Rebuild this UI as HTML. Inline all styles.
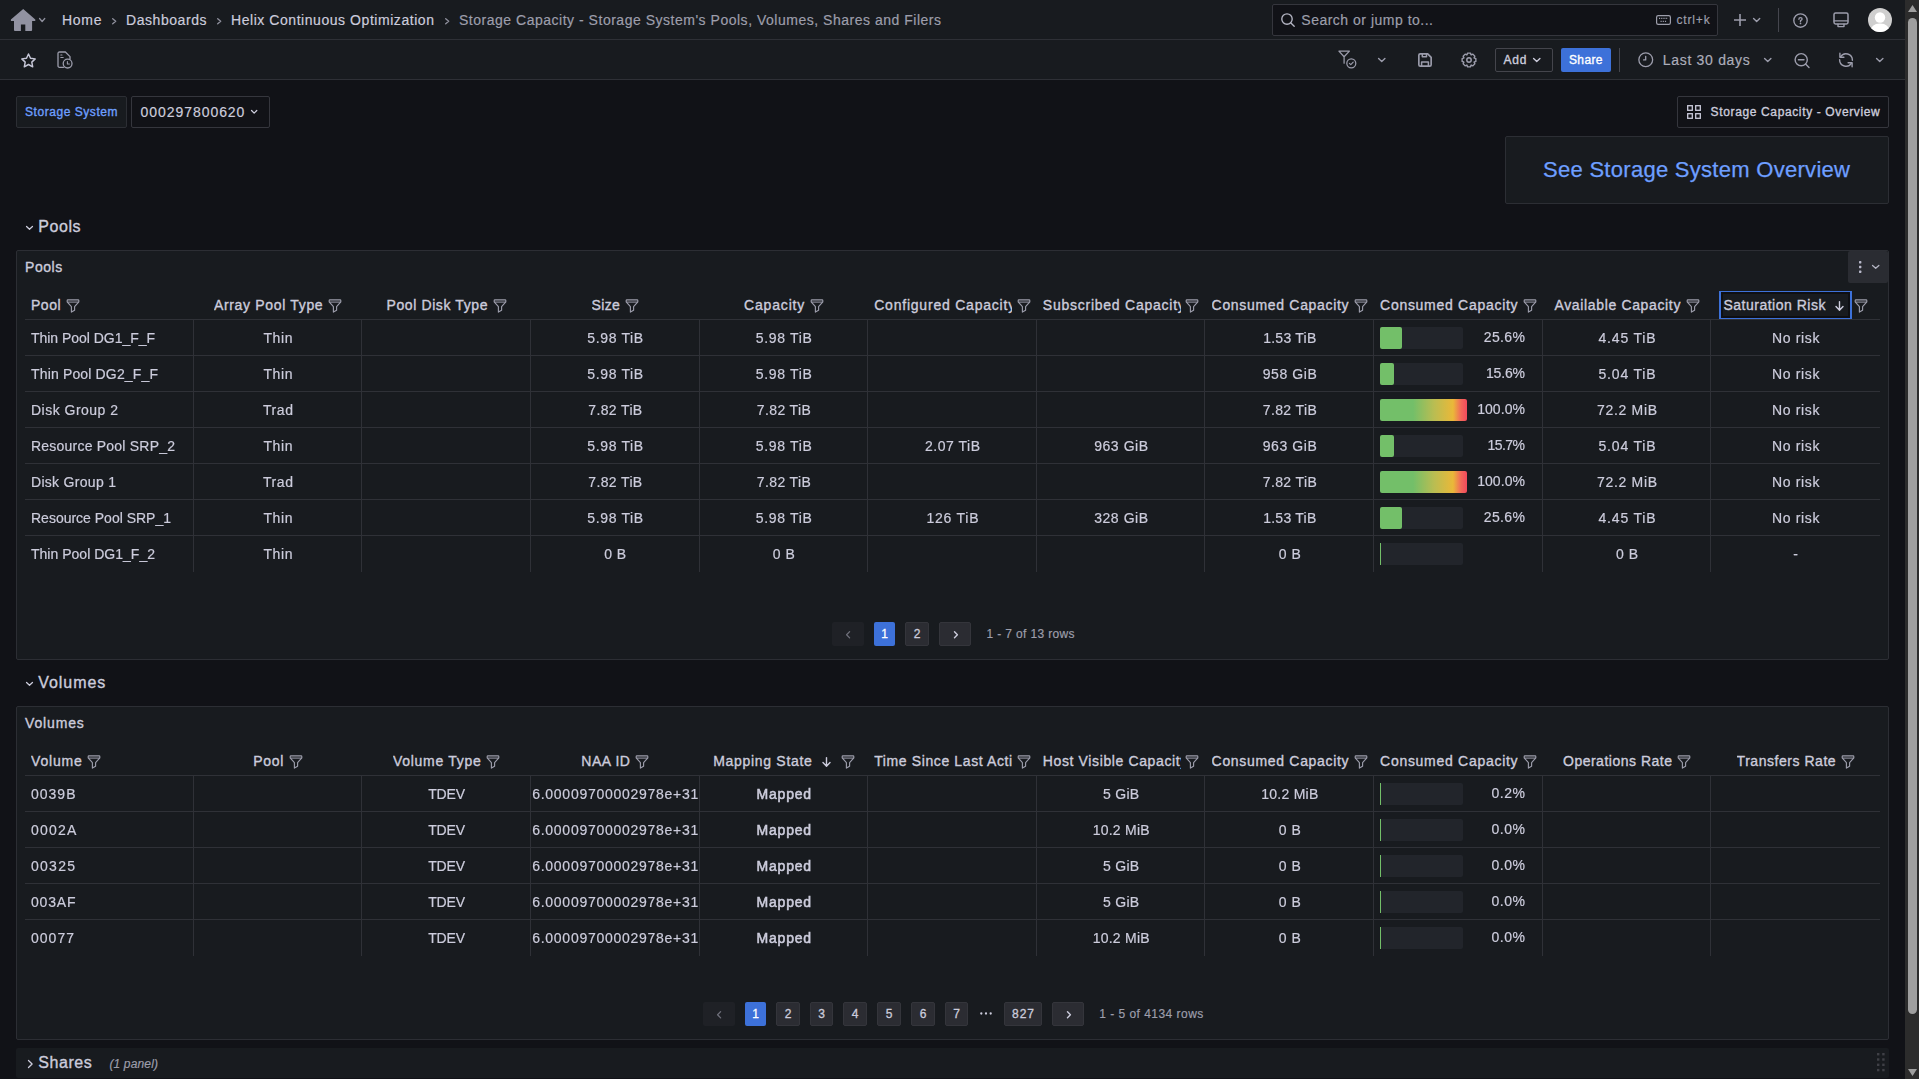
<!DOCTYPE html><html lang="en"><head><meta charset="utf-8"><title>Storage Capacity - Storage System's Pools, Volumes, Shares and Filers - Dashboards - Grafana</title><style>
*{box-sizing:border-box;margin:0;padding:0}
html,body{width:1919px;height:1079px;overflow:hidden;background:#111217}
body{position:relative;font-family:"Liberation Sans",sans-serif;font-size:14px;color:#ccccdc;-webkit-font-smoothing:antialiased}
.t{position:absolute;white-space:pre;display:block;-webkit-text-stroke:0.18px}
.a{position:absolute}
.bar{position:absolute;left:0;width:1905px;height:40px;background:#181b1f;border-bottom:1px solid #2e3036}
.panel{position:absolute;background:#181b1f;border:1px solid #2c2e34;border-radius:2px}
svg{position:absolute;overflow:visible}
.s{fill:none;stroke:#9c9dac;stroke-width:1.5;stroke-linecap:round;stroke-linejoin:round}
.gl{position:absolute;left:25px;width:1855px;will-change:transform}
.gl>div{position:absolute;left:-25px}
.hl{position:absolute;height:1px;background:#2f3137}
.vl{position:absolute;width:1px;background:#2f3137}
.c{position:absolute;height:36px;line-height:36px;text-align:center;white-space:pre;font-size:14px;color:#ccccdc;-webkit-text-stroke:0.2px}
.h{position:absolute;height:31px;display:flex;align-items:center;justify-content:center;padding:0 6px;white-space:pre;font-size:14px;-webkit-text-stroke:0.35px;color:#ccccdc;overflow:hidden}
.h span{overflow:hidden;display:block;line-height:20px;height:20px;flex:0 1 auto;margin-top:1.6px}
.h svg{position:static;flex:0 0 14px;margin-left:4.6px;margin-top:2.4px}
.pg{position:absolute;height:24px;border-radius:2px;font-size:12px;-webkit-text-stroke:0.3px;line-height:24px;text-align:center;color:#ccccdc}
.pg.n{background:#2b2c32;border:1px solid #34353b;line-height:22px}
.pg.on{background:#3d71d9;color:#fff}
.pg.dis{background:#1f2126}
</style></head><body><div class="bar" style="top:0"></div><svg style="left:11px;top:9px" width="24" height="22" viewBox="0 0 24 22"><path d="M12.2 -0.1L24.3 10.5V12.1H21.1V21Q21.1 21.9 20.2 21.9H14.3V15.4H9.9V21.9H3.9Q3 21.9 3 21V12.1H-0.1V10.5Z" fill="#9192a1"/></svg><svg style="left:39px;top:17.9px" width="6.3" height="4.1"><path d="M0.55 0.55L3.15 3.55L5.75 0.55" fill="none" stroke="#8e8f9c" stroke-width="1.3" stroke-linecap="round" stroke-linejoin="round"/></svg><span class="t" style="left:62px;top:9.65px;font-size:14px;line-height:21px;color:#ccccdc;letter-spacing:0.714px;">Home</span><svg style="left:111.7px;top:18.1px" width="4.5" height="6.4"><path d="M0.7 0.7L3.7 3.2L0.7 5.7" fill="none" stroke="#8e8f9c" stroke-width="1.35" stroke-linecap="round" stroke-linejoin="round"/></svg><span class="t" style="left:126px;top:9.65px;font-size:14px;line-height:21px;color:#ccccdc;letter-spacing:0.556px;">Dashboards</span><svg style="left:217.2px;top:18.1px" width="4.5" height="6.4"><path d="M0.7 0.7L3.7 3.2L0.7 5.7" fill="none" stroke="#8e8f9c" stroke-width="1.35" stroke-linecap="round" stroke-linejoin="round"/></svg><span class="t" style="left:231px;top:9.65px;font-size:14px;line-height:21px;color:#ccccdc;letter-spacing:0.552px;">Helix Continuous Optimization</span><svg style="left:444.7px;top:18.1px" width="4.5" height="6.4"><path d="M0.7 0.7L3.7 3.2L0.7 5.7" fill="none" stroke="#8e8f9c" stroke-width="1.35" stroke-linecap="round" stroke-linejoin="round"/></svg><span class="t" style="left:459px;top:9.65px;font-size:14px;line-height:21px;color:#9d9eab;letter-spacing:0.515px;">Storage Capacity - Storage System&#x27;s Pools, Volumes, Shares and Filers</span><div class="a" style="left:1272px;top:4px;width:446px;height:32px;background:#111217;border:1px solid #35363d;border-radius:2px"></div><svg style="left:1281px;top:13px" width="14" height="14" viewBox="0 0 14 14"><circle cx="6" cy="6" r="5.2" class="s" style="stroke:#b4b5c3;stroke-width:1.35"/><path d="M9.9 9.9L13.2 13.2" class="s" style="stroke:#b4b5c3;stroke-width:1.35"/></svg><span class="t" style="left:1301.3px;top:9.65px;font-size:14px;line-height:21px;color:#9d9eab;letter-spacing:0.501px;">Search or jump to...</span><svg style="left:1656px;top:15px" width="15" height="10" viewBox="0 0 15 10"><rect x="0.6" y="0.6" width="13.8" height="8.8" rx="1.6" class="s" style="stroke:#9d9eab;stroke-width:1.2"/><path d="M3 3.4H12M4.5 6.4H10.5" stroke="#9d9eab" stroke-width="1.2" stroke-dasharray="1.2 1" fill="none"/></svg><span class="t" style="left:1676.5px;top:10.64px;font-size:12px;line-height:18px;color:#9d9eab;letter-spacing:0.837px;">ctrl+k</span><svg style="left:1734px;top:14px" width="12" height="12"><path d="M6 0V12M0 6H12" class="s" style="stroke-width:1.6;stroke-linecap:butt"/></svg><svg style="left:1753.3px;top:17.8px" width="7.3" height="4.2"><path d="M0.59 0.59L3.65 3.61L6.71 0.59" fill="none" stroke="#9c9dac" stroke-width="1.4" stroke-linecap="round" stroke-linejoin="round"/></svg><div class="vl" style="left:1778px;top:8px;height:24px;background:#45464e"></div><svg style="left:1793px;top:12.9px" width="15" height="15" viewBox="0 0 15 15"><circle cx="7.5" cy="7.5" r="6.7" class="s" style="stroke-width:1.35"/><path d="M5.9 6.2Q5.9 4.6 7.5 4.6Q9.1 4.6 9.1 6Q9.1 6.9 7.5 7.6V8.5" class="s" style="stroke-width:1.35"/><circle cx="7.5" cy="10.4" r="0.85" fill="#9c9dac"/></svg><svg style="left:1833px;top:12px" width="16" height="16" viewBox="0 0 16 16"><rect x="1" y="0.9" width="14" height="11" rx="1.6" class="s" style="stroke-width:1.5"/><path d="M1.2 8.9H14.8M5 12.2V14.6H11V12.2" class="s" style="stroke-width:1.4"/></svg><svg style="left:1868px;top:8px" width="24" height="24" viewBox="0 0 24 24"><defs><clipPath id="av"><circle cx="12" cy="12" r="12"/></clipPath></defs><circle cx="12" cy="12" r="12" fill="#cfcfcf"/><g clip-path="url(#av)" fill="#fff"><circle cx="12" cy="9.5" r="5.2"/><path d="M2 26Q2 15.5 12 15.5Q22 15.5 22 26Z"/></g></svg><div class="bar" style="top:40px"></div><svg style="left:21.4px;top:52.6px" width="15" height="15" viewBox="0 0 15 15"><path d="M7.5 1L9.5 5.3L14.2 5.9L10.8 9.1L11.7 13.8L7.5 11.5L3.3 13.8L4.2 9.1L0.8 5.9L5.5 5.3Z" class="s" style="stroke:#c6c7d7;stroke-width:1.45"/></svg><svg style="left:57px;top:51px" width="16" height="18" viewBox="0 0 16 18"><path d="M6.5 16.3H2.6Q1 16.3 1 14.7V2.6Q1 1 2.6 1H8.4L13 5.6V8" class="s" style="stroke-width:1.3"/><path d="M3.8 6.5H6.2M3.8 4H5" class="s" style="stroke-width:1.1"/><circle cx="10.6" cy="12.6" r="4.4" class="s" style="stroke-width:1.3"/><path d="M10.4 10.6V13H12.4" class="s" style="stroke-width:1.1"/></svg><svg style="left:1337.9px;top:50.4px" width="19" height="19" viewBox="0 0 19 19"><path d="M0.9 1.1H11.4L6.1 6.7Z M6.1 6.7V13.2" class="s" style="stroke-width:1.25"/><circle cx="13.3" cy="13.3" r="4.5" class="s" style="stroke-width:1.25"/><path d="M11.4 13.4L12.8 14.7L15.2 12.2" class="s" style="stroke-width:1.15"/></svg><svg style="left:1378px;top:58px" width="7.5" height="4.2"><path d="M0.59 0.59L3.75 3.61L6.91 0.59" fill="none" stroke="#9c9dac" stroke-width="1.4" stroke-linecap="round" stroke-linejoin="round"/></svg><svg style="left:1418px;top:53px" width="14" height="14" viewBox="0 0 14 14"><path d="M0.85 2.3Q0.85 0.85 2.3 0.85H9.7L13.15 4.3V11.7Q13.15 13.15 11.7 13.15H2.3Q0.85 13.15 0.85 11.7Z" class="s" style="stroke-width:1.65"/><path d="M4.3 1V3.7H8.5V1M3.6 13V9H10.4V13" class="s" style="stroke-width:1.5"/></svg><svg style="left:1460.75px;top:52.1px" width="16" height="16" viewBox="-8 -8 16 16"><circle r="2.2" class="s" style="stroke-width:1.5"/><path d="M-1.39 -6.86L1.39 -6.86L2.14 -5.07L2.07 -5.10L3.87 -5.83L5.83 -3.87L5.10 -2.07L5.07 -2.14L6.86 -1.39L6.86 1.39L5.07 2.14L5.10 2.07L5.83 3.87L3.87 5.83L2.07 5.10L2.14 5.07L1.39 6.86L-1.39 6.86L-2.14 5.07L-2.07 5.10L-3.87 5.83L-5.83 3.87L-5.10 2.07L-5.07 2.14L-6.86 1.39L-6.86 -1.39L-5.07 -2.14L-5.10 -2.07L-5.83 -3.87L-3.87 -5.83L-2.07 -5.10L-2.14 -5.07Z" class="s" style="stroke-width:1.4"/></svg><div class="a" style="left:1495px;top:48px;width:58px;height:24px;border:1px solid #44454c;border-radius:2px"></div><span class="t" style="left:1503.5px;top:51.14px;font-size:12px;line-height:18px;-webkit-text-stroke:0.35px;color:#ccccdc;letter-spacing:0.820px;">Add</span><svg style="left:1532.5px;top:58px" width="7.5" height="4"><path d="M0.59 0.59L3.75 3.41L6.91 0.59" fill="none" stroke="#ccccdc" stroke-width="1.4" stroke-linecap="round" stroke-linejoin="round"/></svg><div class="a" style="left:1561px;top:48px;width:50px;height:24px;background:#3d71d9;border-radius:2px"></div><span class="t" style="left:1569px;top:51.14px;font-size:12px;line-height:18px;-webkit-text-stroke:0.35px;color:#fff;letter-spacing:0.367px;">Share</span><div class="vl" style="left:1619px;top:48px;height:24px;background:#45464e"></div><svg style="left:1638px;top:52px" width="15.5" height="15.5" viewBox="0 0 15.5 15.5"><circle cx="7.75" cy="7.75" r="6.9" class="s" style="stroke-width:1.3"/><path d="M7.7 4.3V7.9H5.6" class="s" style="stroke-width:1.3"/></svg><span class="t" style="left:1662.8px;top:49.65px;font-size:14px;line-height:21px;color:#acadba;letter-spacing:0.692px;">Last 30 days</span><svg style="left:1764px;top:58px" width="7.5" height="4.2"><path d="M0.59 0.59L3.75 3.61L6.91 0.59" fill="none" stroke="#9c9dac" stroke-width="1.4" stroke-linecap="round" stroke-linejoin="round"/></svg><svg style="left:1794px;top:52.5px" width="15.5" height="15.5" viewBox="0 0 15.5 15.5"><circle cx="7.2" cy="6.7" r="6.1" class="s" style="stroke-width:1.4"/><path d="M11.6 11.1L15 14.5M4.4 6.7H10" class="s" style="stroke-width:1.4"/></svg><svg style="left:1838px;top:52px" width="15.5" height="15.5" viewBox="0 0 15.5 15.5"><path d="M2.5 4.9A6.4 6.4 0 0 1 14.4 8.2M13.5 11.1A6.4 6.4 0 0 1 1.6 7.8" class="s" style="stroke-width:1.4"/><path d="M1.9 1.3V5.2H5.9M14.1 14.7V10.8H10.1" class="s" style="stroke-width:1.4"/></svg><svg style="left:1876px;top:58px" width="7.5" height="4.2"><path d="M0.59 0.59L3.75 3.61L6.91 0.59" fill="none" stroke="#9c9dac" stroke-width="1.4" stroke-linecap="round" stroke-linejoin="round"/></svg><div class="a" style="left:16px;top:96px;width:111px;height:32px;background:#181b1f;border:1px solid #2c2e34;border-radius:2px"></div><span class="t" style="left:25px;top:102.54px;font-size:12px;line-height:18px;-webkit-text-stroke:0.35px;color:#6e9fff;letter-spacing:0.548px;">Storage System</span><div class="a" style="left:131px;top:96px;width:139px;height:32px;background:#111217;border:1px solid #35363d;border-radius:2px"></div><span class="t" style="left:140.6px;top:102.05px;font-size:14px;line-height:21px;color:#ccccdc;letter-spacing:0.942px;">000297800620</span><svg style="left:250.9px;top:109.9px" width="6.3" height="3.7"><path d="M0.55 0.55L3.15 3.15L5.75 0.55" fill="none" stroke="#ccccdc" stroke-width="1.3" stroke-linecap="round" stroke-linejoin="round"/></svg><div class="a" style="left:1677px;top:96px;width:212px;height:32px;background:#111217;border:1px solid #35363d;border-radius:2px"></div><svg style="left:1687px;top:105px" width="14" height="14" viewBox="0 0 14 14"><g class="s" style="stroke:#ccccdc;stroke-width:1.3;stroke-linejoin:miter"><rect x="0.7" y="0.7" width="4.6" height="4.6"/><rect x="8.7" y="0.7" width="4.6" height="4.6"/><rect x="0.7" y="8.7" width="4.6" height="4.6"/><rect x="8.7" y="8.7" width="4.6" height="4.6"/></g></svg><span class="t" style="left:1710.6px;top:102.54px;font-size:12px;line-height:18px;-webkit-text-stroke:0.35px;color:#ccccdc;letter-spacing:0.633px;">Storage Capacity - Overview</span><div class="panel" style="left:1505px;top:136px;width:384px;height:68px"></div><span class="t" style="left:1543px;top:152.88px;font-size:22px;line-height:33px;color:#6e9fff;letter-spacing:0.285px;-webkit-text-stroke:0.25px;">See Storage System Overview</span><svg style="left:26.3px;top:226.2px" width="7" height="3.8"><path d="M0.55 0.55L3.5 3.25L6.45 0.55" fill="none" stroke="#ccccdc" stroke-width="1.3" stroke-linecap="round" stroke-linejoin="round"/></svg><span class="t" style="left:38.3px;top:214.66px;font-size:16px;line-height:24px;-webkit-text-stroke:0.35px;color:#ccccdc;letter-spacing:0.567px;">Pools</span><div class="panel" style="left:16px;top:250px;width:1873px;height:410px"></div><span class="t" style="left:25px;top:257.35px;font-size:14px;line-height:21px;-webkit-text-stroke:0.35px;color:#ccccdc;letter-spacing:0.542px;">Pools</span><div class="a" style="left:1848px;top:251px;width:40px;height:32px;background:#2a2c32;border-radius:2px"></div><svg style="left:1858.8px;top:261px" width="3" height="12"><rect x="0" y="0.05" width="2.4" height="2.4" rx="0.6" fill="#b9b9cb"/><rect x="0" y="4.8" width="2.4" height="2.4" rx="0.6" fill="#b9b9cb"/><rect x="0" y="9.55" width="2.4" height="2.4" rx="0.6" fill="#b9b9cb"/></svg><svg style="left:1872.2px;top:265.2px" width="7.4" height="3.9"><path d="M0.55 0.55L3.7 3.35L6.85 0.55" fill="none" stroke="#b4b5c3" stroke-width="1.3" stroke-linecap="round" stroke-linejoin="round"/></svg><div class="hl" style="left:25px;top:319px;width:1855px"></div><div class="hl" style="left:25px;top:355px;width:1855px"></div><div class="hl" style="left:25px;top:391px;width:1855px"></div><div class="hl" style="left:25px;top:427px;width:1855px"></div><div class="hl" style="left:25px;top:463px;width:1855px"></div><div class="hl" style="left:25px;top:499px;width:1855px"></div><div class="hl" style="left:25px;top:535px;width:1855px"></div><div class="vl" style="left:193px;top:320px;height:252px"></div><div class="vl" style="left:361px;top:320px;height:252px"></div><div class="vl" style="left:530px;top:320px;height:252px"></div><div class="vl" style="left:699px;top:320px;height:252px"></div><div class="vl" style="left:867px;top:320px;height:252px"></div><div class="vl" style="left:1036px;top:320px;height:252px"></div><div class="vl" style="left:1204px;top:320px;height:252px"></div><div class="vl" style="left:1373px;top:320px;height:252px"></div><div class="vl" style="left:1542px;top:320px;height:252px"></div><div class="vl" style="left:1710px;top:320px;height:252px"></div><div class="h" style="left:25.00px;top:289px;width:168.64px;justify-content:flex-start;"><span style="letter-spacing:0.523px">Pool</span><svg width="14" height="14" viewBox="0 0 14 14"><path d="M1.2 1.6Q1.2 0.9 1.9 0.9H12.1Q12.8 0.9 12.8 1.6V2.9L8.6 7.6V11.3L5.4 13.1V7.6L1.2 2.9Z" fill="none" stroke="#9c9dab" stroke-width="1.15" stroke-linejoin="round"/><path d="M1.4 3.1H12.6" stroke="#9c9dab" stroke-width="1" fill="none"/></svg></div><div class="h" style="left:193.64px;top:289px;width:168.64px;"><span style="letter-spacing:0.667px">Array Pool Type</span><svg width="14" height="14" viewBox="0 0 14 14"><path d="M1.2 1.6Q1.2 0.9 1.9 0.9H12.1Q12.8 0.9 12.8 1.6V2.9L8.6 7.6V11.3L5.4 13.1V7.6L1.2 2.9Z" fill="none" stroke="#9c9dab" stroke-width="1.15" stroke-linejoin="round"/><path d="M1.4 3.1H12.6" stroke="#9c9dab" stroke-width="1" fill="none"/></svg></div><div class="h" style="left:362.27px;top:289px;width:168.64px;"><span style="letter-spacing:0.606px">Pool Disk Type</span><svg width="14" height="14" viewBox="0 0 14 14"><path d="M1.2 1.6Q1.2 0.9 1.9 0.9H12.1Q12.8 0.9 12.8 1.6V2.9L8.6 7.6V11.3L5.4 13.1V7.6L1.2 2.9Z" fill="none" stroke="#9c9dab" stroke-width="1.15" stroke-linejoin="round"/><path d="M1.4 3.1H12.6" stroke="#9c9dab" stroke-width="1" fill="none"/></svg></div><div class="h" style="left:530.91px;top:289px;width:168.64px;"><span style="letter-spacing:0.355px">Size</span><svg width="14" height="14" viewBox="0 0 14 14"><path d="M1.2 1.6Q1.2 0.9 1.9 0.9H12.1Q12.8 0.9 12.8 1.6V2.9L8.6 7.6V11.3L5.4 13.1V7.6L1.2 2.9Z" fill="none" stroke="#9c9dab" stroke-width="1.15" stroke-linejoin="round"/><path d="M1.4 3.1H12.6" stroke="#9c9dab" stroke-width="1" fill="none"/></svg></div><div class="h" style="left:699.55px;top:289px;width:168.64px;"><span style="letter-spacing:0.847px">Capacity</span><svg width="14" height="14" viewBox="0 0 14 14"><path d="M1.2 1.6Q1.2 0.9 1.9 0.9H12.1Q12.8 0.9 12.8 1.6V2.9L8.6 7.6V11.3L5.4 13.1V7.6L1.2 2.9Z" fill="none" stroke="#9c9dab" stroke-width="1.15" stroke-linejoin="round"/><path d="M1.4 3.1H12.6" stroke="#9c9dab" stroke-width="1" fill="none"/></svg></div><div class="h" style="left:868.18px;top:289px;width:168.64px;"><span style="letter-spacing:0.786px">Configured Capacity</span><svg width="14" height="14" viewBox="0 0 14 14"><path d="M1.2 1.6Q1.2 0.9 1.9 0.9H12.1Q12.8 0.9 12.8 1.6V2.9L8.6 7.6V11.3L5.4 13.1V7.6L1.2 2.9Z" fill="none" stroke="#9c9dab" stroke-width="1.15" stroke-linejoin="round"/><path d="M1.4 3.1H12.6" stroke="#9c9dab" stroke-width="1" fill="none"/></svg></div><div class="h" style="left:1036.82px;top:289px;width:168.64px;"><span style="letter-spacing:0.755px">Subscribed Capacity</span><svg width="14" height="14" viewBox="0 0 14 14"><path d="M1.2 1.6Q1.2 0.9 1.9 0.9H12.1Q12.8 0.9 12.8 1.6V2.9L8.6 7.6V11.3L5.4 13.1V7.6L1.2 2.9Z" fill="none" stroke="#9c9dab" stroke-width="1.15" stroke-linejoin="round"/><path d="M1.4 3.1H12.6" stroke="#9c9dab" stroke-width="1" fill="none"/></svg></div><div class="h" style="left:1205.45px;top:289px;width:168.64px;"><span style="letter-spacing:0.684px">Consumed Capacity</span><svg width="14" height="14" viewBox="0 0 14 14"><path d="M1.2 1.6Q1.2 0.9 1.9 0.9H12.1Q12.8 0.9 12.8 1.6V2.9L8.6 7.6V11.3L5.4 13.1V7.6L1.2 2.9Z" fill="none" stroke="#9c9dab" stroke-width="1.15" stroke-linejoin="round"/><path d="M1.4 3.1H12.6" stroke="#9c9dab" stroke-width="1" fill="none"/></svg></div><div class="h" style="left:1374.09px;top:289px;width:168.64px;"><span style="letter-spacing:0.715px">Consumed Capacity</span><svg width="14" height="14" viewBox="0 0 14 14"><path d="M1.2 1.6Q1.2 0.9 1.9 0.9H12.1Q12.8 0.9 12.8 1.6V2.9L8.6 7.6V11.3L5.4 13.1V7.6L1.2 2.9Z" fill="none" stroke="#9c9dab" stroke-width="1.15" stroke-linejoin="round"/><path d="M1.4 3.1H12.6" stroke="#9c9dab" stroke-width="1" fill="none"/></svg></div><div class="h" style="left:1542.73px;top:289px;width:168.64px;"><span style="letter-spacing:0.652px">Available Capacity</span><svg width="14" height="14" viewBox="0 0 14 14"><path d="M1.2 1.6Q1.2 0.9 1.9 0.9H12.1Q12.8 0.9 12.8 1.6V2.9L8.6 7.6V11.3L5.4 13.1V7.6L1.2 2.9Z" fill="none" stroke="#9c9dab" stroke-width="1.15" stroke-linejoin="round"/><path d="M1.4 3.1H12.6" stroke="#9c9dab" stroke-width="1" fill="none"/></svg></div><div class="h" style="left:1711.36px;top:289px;width:168.64px;"><span style="letter-spacing:0.504px">Saturation Risk</span><svg width="9" height="10" viewBox="0 0 9 10" style="margin-left:9px;flex:0 0 9px"><path d="M4.5 0.6V9M1 5.6L4.5 9.2L8 5.6" fill="none" stroke="#ccccdc" stroke-width="1.4" stroke-linecap="round" stroke-linejoin="round"/></svg><svg style="margin-left:10px" width="14" height="14" viewBox="0 0 14 14"><path d="M1.2 1.6Q1.2 0.9 1.9 0.9H12.1Q12.8 0.9 12.8 1.6V2.9L8.6 7.6V11.3L5.4 13.1V7.6L1.2 2.9Z" fill="none" stroke="#9c9dab" stroke-width="1.15" stroke-linejoin="round"/><path d="M1.4 3.1H12.6" stroke="#9c9dab" stroke-width="1" fill="none"/></svg></div><div class="a" style="left:1719px;top:291px;width:133px;height:28px;border:solid #3d71d9;border-width:1px 2px;box-shadow:inset 0 0 0 2px #0e0f13"></div><div class="gl" style="top:320px;height:252px"><div style="top:-320px"><div class="c" style="left:25.00px;top:320px;width:168.64px;text-align:left;padding-left:6px;letter-spacing:-0.031px;">Thin Pool DG1_F_F</div><div class="c" style="left:193.64px;top:320px;width:168.64px;padding-left:0.589px;letter-spacing:0.589px;">Thin</div><div class="c" style="left:530.91px;top:320px;width:168.64px;padding-left:0.661px;letter-spacing:0.661px;">5.98 TiB</div><div class="c" style="left:699.55px;top:320px;width:168.64px;padding-left:0.661px;letter-spacing:0.661px;">5.98 TiB</div><div class="c" style="left:1205.45px;top:320px;width:168.64px;padding-left:0.232px;letter-spacing:0.232px;">1.53 TiB</div><div class="a" style="left:1380px;top:327px;width:83px;height:22px;border-radius:2px;background:#22252b"></div><div class="a" style="left:1380px;top:327px;width:22.3px;height:22px;border-radius:2px;background:#73bf69"></div><div class="c" style="left:1400px;top:318.7px;width:125.37px;text-align:right;letter-spacing:0.374px">25.6%</div><div class="c" style="left:1542.73px;top:320px;width:168.64px;padding-left:0.804px;letter-spacing:0.804px;">4.45 TiB</div><div class="c" style="left:1711.36px;top:320px;width:168.64px;padding-left:0.656px;letter-spacing:0.656px;">No risk</div><div class="c" style="left:25.00px;top:356px;width:168.64px;text-align:left;padding-left:6px;letter-spacing:0.156px;">Thin Pool DG2_F_F</div><div class="c" style="left:193.64px;top:356px;width:168.64px;padding-left:0.589px;letter-spacing:0.589px;">Thin</div><div class="c" style="left:530.91px;top:356px;width:168.64px;padding-left:0.661px;letter-spacing:0.661px;">5.98 TiB</div><div class="c" style="left:699.55px;top:356px;width:168.64px;padding-left:0.661px;letter-spacing:0.661px;">5.98 TiB</div><div class="c" style="left:1205.45px;top:356px;width:168.64px;padding-left:0.568px;letter-spacing:0.568px;">958 GiB</div><div class="a" style="left:1380px;top:363px;width:83px;height:22px;border-radius:2px;background:#22252b"></div><div class="a" style="left:1380px;top:363px;width:13.6px;height:22px;border-radius:2px;background:#73bf69"></div><div class="c" style="left:1400px;top:354.7px;width:124.82px;text-align:right;letter-spacing:-0.176px">15.6%</div><div class="c" style="left:1542.73px;top:356px;width:168.64px;padding-left:0.804px;letter-spacing:0.804px;">5.04 TiB</div><div class="c" style="left:1711.36px;top:356px;width:168.64px;padding-left:0.656px;letter-spacing:0.656px;">No risk</div><div class="c" style="left:25.00px;top:392px;width:168.64px;text-align:left;padding-left:6px;letter-spacing:0.482px;">Disk Group 2</div><div class="c" style="left:193.64px;top:392px;width:168.64px;padding-left:0.573px;letter-spacing:0.573px;">Trad</div><div class="c" style="left:530.91px;top:392px;width:168.64px;padding-left:0.375px;letter-spacing:0.375px;">7.82 TiB</div><div class="c" style="left:699.55px;top:392px;width:168.64px;padding-left:0.375px;letter-spacing:0.375px;">7.82 TiB</div><div class="c" style="left:1205.45px;top:392px;width:168.64px;padding-left:0.375px;letter-spacing:0.375px;">7.82 TiB</div><div class="a" style="left:1380px;top:399px;width:87px;height:22px;border-radius:2px;background:linear-gradient(90deg,#73bf69 0%,#73bf69 38%,#b9bd52 62%,#eab839 84%,#f2695a 93%,#f2495c 100%)"></div><div class="c" style="left:1400px;top:390.7px;width:125.06px;text-align:right;letter-spacing:0.063px">100.0%</div><div class="c" style="left:1542.73px;top:392px;width:168.64px;padding-left:0.679px;letter-spacing:0.679px;">72.2 MiB</div><div class="c" style="left:1711.36px;top:392px;width:168.64px;padding-left:0.656px;letter-spacing:0.656px;">No risk</div><div class="c" style="left:25.00px;top:428px;width:168.64px;text-align:left;padding-left:6px;letter-spacing:0.218px;">Resource Pool SRP_2</div><div class="c" style="left:193.64px;top:428px;width:168.64px;padding-left:0.589px;letter-spacing:0.589px;">Thin</div><div class="c" style="left:530.91px;top:428px;width:168.64px;padding-left:0.661px;letter-spacing:0.661px;">5.98 TiB</div><div class="c" style="left:699.55px;top:428px;width:168.64px;padding-left:0.661px;letter-spacing:0.661px;">5.98 TiB</div><div class="c" style="left:868.18px;top:428px;width:168.64px;padding-left:0.518px;letter-spacing:0.518px;">2.07 TiB</div><div class="c" style="left:1036.82px;top:428px;width:168.64px;padding-left:0.568px;letter-spacing:0.568px;">963 GiB</div><div class="c" style="left:1205.45px;top:428px;width:168.64px;padding-left:0.568px;letter-spacing:0.568px;">963 GiB</div><div class="a" style="left:1380px;top:435px;width:83px;height:22px;border-radius:2px;background:#22252b"></div><div class="a" style="left:1380px;top:435px;width:13.7px;height:22px;border-radius:2px;background:#73bf69"></div><div class="c" style="left:1400px;top:426.7px;width:124.45px;text-align:right;letter-spacing:-0.551px">15.7%</div><div class="c" style="left:1542.73px;top:428px;width:168.64px;padding-left:0.804px;letter-spacing:0.804px;">5.04 TiB</div><div class="c" style="left:1711.36px;top:428px;width:168.64px;padding-left:0.656px;letter-spacing:0.656px;">No risk</div><div class="c" style="left:25.00px;top:464px;width:168.64px;text-align:left;padding-left:6px;letter-spacing:0.300px;">Disk Group 1</div><div class="c" style="left:193.64px;top:464px;width:168.64px;padding-left:0.573px;letter-spacing:0.573px;">Trad</div><div class="c" style="left:530.91px;top:464px;width:168.64px;padding-left:0.375px;letter-spacing:0.375px;">7.82 TiB</div><div class="c" style="left:699.55px;top:464px;width:168.64px;padding-left:0.375px;letter-spacing:0.375px;">7.82 TiB</div><div class="c" style="left:1205.45px;top:464px;width:168.64px;padding-left:0.375px;letter-spacing:0.375px;">7.82 TiB</div><div class="a" style="left:1380px;top:471px;width:87px;height:22px;border-radius:2px;background:linear-gradient(90deg,#73bf69 0%,#73bf69 38%,#b9bd52 62%,#eab839 84%,#f2695a 93%,#f2495c 100%)"></div><div class="c" style="left:1400px;top:462.7px;width:125.06px;text-align:right;letter-spacing:0.063px">100.0%</div><div class="c" style="left:1542.73px;top:464px;width:168.64px;padding-left:0.679px;letter-spacing:0.679px;">72.2 MiB</div><div class="c" style="left:1711.36px;top:464px;width:168.64px;padding-left:0.656px;letter-spacing:0.656px;">No risk</div><div class="c" style="left:25.00px;top:500px;width:168.64px;text-align:left;padding-left:6px;letter-spacing:-0.004px;">Resource Pool SRP_1</div><div class="c" style="left:193.64px;top:500px;width:168.64px;padding-left:0.589px;letter-spacing:0.589px;">Thin</div><div class="c" style="left:530.91px;top:500px;width:168.64px;padding-left:0.661px;letter-spacing:0.661px;">5.98 TiB</div><div class="c" style="left:699.55px;top:500px;width:168.64px;padding-left:0.661px;letter-spacing:0.661px;">5.98 TiB</div><div class="c" style="left:868.18px;top:500px;width:168.64px;padding-left:0.753px;letter-spacing:0.753px;">126 TiB</div><div class="c" style="left:1036.82px;top:500px;width:168.64px;padding-left:0.568px;letter-spacing:0.568px;">328 GiB</div><div class="c" style="left:1205.45px;top:500px;width:168.64px;padding-left:0.232px;letter-spacing:0.232px;">1.53 TiB</div><div class="a" style="left:1380px;top:507px;width:83px;height:22px;border-radius:2px;background:#22252b"></div><div class="a" style="left:1380px;top:507px;width:22.3px;height:22px;border-radius:2px;background:#73bf69"></div><div class="c" style="left:1400px;top:498.7px;width:125.37px;text-align:right;letter-spacing:0.374px">25.6%</div><div class="c" style="left:1542.73px;top:500px;width:168.64px;padding-left:0.804px;letter-spacing:0.804px;">4.45 TiB</div><div class="c" style="left:1711.36px;top:500px;width:168.64px;padding-left:0.656px;letter-spacing:0.656px;">No risk</div><div class="c" style="left:25.00px;top:536px;width:168.64px;text-align:left;padding-left:6px;letter-spacing:0.017px;">Thin Pool DG1_F_2</div><div class="c" style="left:193.64px;top:536px;width:168.64px;padding-left:0.589px;letter-spacing:0.589px;">Thin</div><div class="c" style="left:530.91px;top:536px;width:168.64px;padding-left:0.492px;letter-spacing:0.492px;">0 B</div><div class="c" style="left:699.55px;top:536px;width:168.64px;padding-left:0.492px;letter-spacing:0.492px;">0 B</div><div class="c" style="left:1205.45px;top:536px;width:168.64px;padding-left:0.492px;letter-spacing:0.492px;">0 B</div><div class="a" style="left:1380px;top:543px;width:83px;height:22px;border-radius:2px;background:#22252b"></div><div class="a" style="left:1380px;top:543px;width:1.3px;height:22px;border-radius:0px;background:#73bf69"></div><div class="c" style="left:1542.73px;top:536px;width:168.64px;padding-left:0.492px;letter-spacing:0.492px;">0 B</div><div class="c" style="left:1711.36px;top:536px;width:168.64px;padding-left:0.328px;letter-spacing:0.328px;">-</div></div></div><div class="pg dis" style="left:832px;top:622px;width:32px"><svg style="left:14.3px;top:8.5px" width="4" height="7.5"><path d="M3.6 0.6L0.6 3.75L3.6 6.9" fill="none" stroke="#6f707b" stroke-width="1.3" stroke-linecap="round" stroke-linejoin="round"/></svg></div><div class="pg on" style="left:874px;top:622px;width:21px">1</div><div class="pg n" style="left:905px;top:622px;width:24px;">2</div><div class="pg n" style="left:939px;top:622px;width:32px"><svg style="left:13.6px;top:7.7px" width="4" height="7.5"><path d="M0.5 0.7L3.4 3.75L0.5 6.8" fill="none" stroke="#ccccdc" stroke-width="1.4" stroke-linecap="round" stroke-linejoin="round"/></svg></div><span class="t" style="left:986.6px;top:625.04px;font-size:12px;line-height:18px;color:#9d9eab;letter-spacing:0.352px;">1 - 7 of 13 rows</span><svg style="left:26.3px;top:682.4px" width="7" height="3.8"><path d="M0.55 0.55L3.5 3.25L6.45 0.55" fill="none" stroke="#ccccdc" stroke-width="1.3" stroke-linecap="round" stroke-linejoin="round"/></svg><span class="t" style="left:38.3px;top:670.86px;font-size:16px;line-height:24px;-webkit-text-stroke:0.35px;color:#ccccdc;letter-spacing:0.938px;">Volumes</span><div class="panel" style="left:16px;top:706px;width:1873px;height:334px"></div><span class="t" style="left:25px;top:713.35px;font-size:14px;line-height:21px;-webkit-text-stroke:0.35px;color:#ccccdc;letter-spacing:0.849px;">Volumes</span><div class="hl" style="left:25px;top:775px;width:1855px"></div><div class="hl" style="left:25px;top:811px;width:1855px"></div><div class="hl" style="left:25px;top:847px;width:1855px"></div><div class="hl" style="left:25px;top:883px;width:1855px"></div><div class="hl" style="left:25px;top:919px;width:1855px"></div><div class="vl" style="left:193px;top:776px;height:180px"></div><div class="vl" style="left:361px;top:776px;height:180px"></div><div class="vl" style="left:530px;top:776px;height:180px"></div><div class="vl" style="left:699px;top:776px;height:180px"></div><div class="vl" style="left:867px;top:776px;height:180px"></div><div class="vl" style="left:1036px;top:776px;height:180px"></div><div class="vl" style="left:1204px;top:776px;height:180px"></div><div class="vl" style="left:1373px;top:776px;height:180px"></div><div class="vl" style="left:1542px;top:776px;height:180px"></div><div class="vl" style="left:1710px;top:776px;height:180px"></div><div class="h" style="left:25.00px;top:745px;width:168.64px;justify-content:flex-start;"><span style="letter-spacing:0.819px">Volume</span><svg width="14" height="14" viewBox="0 0 14 14"><path d="M1.2 1.6Q1.2 0.9 1.9 0.9H12.1Q12.8 0.9 12.8 1.6V2.9L8.6 7.6V11.3L5.4 13.1V7.6L1.2 2.9Z" fill="none" stroke="#9c9dab" stroke-width="1.15" stroke-linejoin="round"/><path d="M1.4 3.1H12.6" stroke="#9c9dab" stroke-width="1" fill="none"/></svg></div><div class="h" style="left:193.64px;top:745px;width:168.64px;"><span style="letter-spacing:0.656px">Pool</span><svg width="14" height="14" viewBox="0 0 14 14"><path d="M1.2 1.6Q1.2 0.9 1.9 0.9H12.1Q12.8 0.9 12.8 1.6V2.9L8.6 7.6V11.3L5.4 13.1V7.6L1.2 2.9Z" fill="none" stroke="#9c9dab" stroke-width="1.15" stroke-linejoin="round"/><path d="M1.4 3.1H12.6" stroke="#9c9dab" stroke-width="1" fill="none"/></svg></div><div class="h" style="left:362.27px;top:745px;width:168.64px;"><span style="letter-spacing:0.731px">Volume Type</span><svg width="14" height="14" viewBox="0 0 14 14"><path d="M1.2 1.6Q1.2 0.9 1.9 0.9H12.1Q12.8 0.9 12.8 1.6V2.9L8.6 7.6V11.3L5.4 13.1V7.6L1.2 2.9Z" fill="none" stroke="#9c9dab" stroke-width="1.15" stroke-linejoin="round"/><path d="M1.4 3.1H12.6" stroke="#9c9dab" stroke-width="1" fill="none"/></svg></div><div class="h" style="left:530.91px;top:745px;width:168.64px;"><span style="letter-spacing:0.559px">NAA ID</span><svg width="14" height="14" viewBox="0 0 14 14"><path d="M1.2 1.6Q1.2 0.9 1.9 0.9H12.1Q12.8 0.9 12.8 1.6V2.9L8.6 7.6V11.3L5.4 13.1V7.6L1.2 2.9Z" fill="none" stroke="#9c9dab" stroke-width="1.15" stroke-linejoin="round"/><path d="M1.4 3.1H12.6" stroke="#9c9dab" stroke-width="1" fill="none"/></svg></div><div class="h" style="left:699.55px;top:745px;width:168.64px;"><span style="letter-spacing:0.700px">Mapping State</span><svg width="9" height="10" viewBox="0 0 9 10" style="margin-left:9px;flex:0 0 9px"><path d="M4.5 0.6V9M1 5.6L4.5 9.2L8 5.6" fill="none" stroke="#ccccdc" stroke-width="1.4" stroke-linecap="round" stroke-linejoin="round"/></svg><svg style="margin-left:10px" width="14" height="14" viewBox="0 0 14 14"><path d="M1.2 1.6Q1.2 0.9 1.9 0.9H12.1Q12.8 0.9 12.8 1.6V2.9L8.6 7.6V11.3L5.4 13.1V7.6L1.2 2.9Z" fill="none" stroke="#9c9dab" stroke-width="1.15" stroke-linejoin="round"/><path d="M1.4 3.1H12.6" stroke="#9c9dab" stroke-width="1" fill="none"/></svg></div><div class="h" style="left:868.18px;top:745px;width:168.64px;"><span style="letter-spacing:0.617px">Time Since Last Activity</span><svg width="14" height="14" viewBox="0 0 14 14"><path d="M1.2 1.6Q1.2 0.9 1.9 0.9H12.1Q12.8 0.9 12.8 1.6V2.9L8.6 7.6V11.3L5.4 13.1V7.6L1.2 2.9Z" fill="none" stroke="#9c9dab" stroke-width="1.15" stroke-linejoin="round"/><path d="M1.4 3.1H12.6" stroke="#9c9dab" stroke-width="1" fill="none"/></svg></div><div class="h" style="left:1036.82px;top:745px;width:168.64px;"><span style="letter-spacing:0.623px">Host Visible Capacity</span><svg width="14" height="14" viewBox="0 0 14 14"><path d="M1.2 1.6Q1.2 0.9 1.9 0.9H12.1Q12.8 0.9 12.8 1.6V2.9L8.6 7.6V11.3L5.4 13.1V7.6L1.2 2.9Z" fill="none" stroke="#9c9dab" stroke-width="1.15" stroke-linejoin="round"/><path d="M1.4 3.1H12.6" stroke="#9c9dab" stroke-width="1" fill="none"/></svg></div><div class="h" style="left:1205.45px;top:745px;width:168.64px;"><span style="letter-spacing:0.684px">Consumed Capacity</span><svg width="14" height="14" viewBox="0 0 14 14"><path d="M1.2 1.6Q1.2 0.9 1.9 0.9H12.1Q12.8 0.9 12.8 1.6V2.9L8.6 7.6V11.3L5.4 13.1V7.6L1.2 2.9Z" fill="none" stroke="#9c9dab" stroke-width="1.15" stroke-linejoin="round"/><path d="M1.4 3.1H12.6" stroke="#9c9dab" stroke-width="1" fill="none"/></svg></div><div class="h" style="left:1374.09px;top:745px;width:168.64px;"><span style="letter-spacing:0.715px">Consumed Capacity</span><svg width="14" height="14" viewBox="0 0 14 14"><path d="M1.2 1.6Q1.2 0.9 1.9 0.9H12.1Q12.8 0.9 12.8 1.6V2.9L8.6 7.6V11.3L5.4 13.1V7.6L1.2 2.9Z" fill="none" stroke="#9c9dab" stroke-width="1.15" stroke-linejoin="round"/><path d="M1.4 3.1H12.6" stroke="#9c9dab" stroke-width="1" fill="none"/></svg></div><div class="h" style="left:1542.73px;top:745px;width:168.64px;"><span style="letter-spacing:0.503px">Operations Rate</span><svg width="14" height="14" viewBox="0 0 14 14"><path d="M1.2 1.6Q1.2 0.9 1.9 0.9H12.1Q12.8 0.9 12.8 1.6V2.9L8.6 7.6V11.3L5.4 13.1V7.6L1.2 2.9Z" fill="none" stroke="#9c9dab" stroke-width="1.15" stroke-linejoin="round"/><path d="M1.4 3.1H12.6" stroke="#9c9dab" stroke-width="1" fill="none"/></svg></div><div class="h" style="left:1711.36px;top:745px;width:168.64px;"><span style="letter-spacing:0.532px">Transfers Rate</span><svg width="14" height="14" viewBox="0 0 14 14"><path d="M1.2 1.6Q1.2 0.9 1.9 0.9H12.1Q12.8 0.9 12.8 1.6V2.9L8.6 7.6V11.3L5.4 13.1V7.6L1.2 2.9Z" fill="none" stroke="#9c9dab" stroke-width="1.15" stroke-linejoin="round"/><path d="M1.4 3.1H12.6" stroke="#9c9dab" stroke-width="1" fill="none"/></svg></div><div class="gl" style="top:776px;height:180px"><div style="top:-776px"><div class="c" style="left:25.00px;top:776px;width:168.64px;text-align:left;padding-left:6px;letter-spacing:1.004px;">0039B</div><div class="c" style="left:362.27px;top:776px;width:168.64px;padding-left:-0.115px;letter-spacing:-0.115px;">TDEV</div><div class="c" style="left:530.91px;top:776px;width:168.64px;padding-left:0.725px;letter-spacing:0.725px;">6.00009700002978e+31</div><div class="c" style="left:699.55px;top:776px;width:168.64px;padding-left:0.781px;-webkit-text-stroke:0.55px;letter-spacing:0.781px;">Mapped</div><div class="c" style="left:1036.82px;top:776px;width:168.64px;padding-left:0.246px;letter-spacing:0.246px;">5 GiB</div><div class="c" style="left:1205.45px;top:776px;width:168.64px;padding-left:0.250px;letter-spacing:0.250px;">10.2 MiB</div><div class="a" style="left:1380px;top:783px;width:83px;height:22px;border-radius:2px;background:#22252b"></div><div class="a" style="left:1380px;top:783px;width:1.3px;height:22px;border-radius:0px;background:#73bf69"></div><div class="c" style="left:1400px;top:774.7px;width:125.53px;text-align:right;letter-spacing:0.526px">0.2%</div><div class="c" style="left:25.00px;top:812px;width:168.64px;text-align:left;padding-left:6px;letter-spacing:1.204px;">0002A</div><div class="c" style="left:362.27px;top:812px;width:168.64px;padding-left:-0.115px;letter-spacing:-0.115px;">TDEV</div><div class="c" style="left:530.91px;top:812px;width:168.64px;padding-left:0.725px;letter-spacing:0.725px;">6.00009700002978e+31</div><div class="c" style="left:699.55px;top:812px;width:168.64px;padding-left:0.781px;-webkit-text-stroke:0.55px;letter-spacing:0.781px;">Mapped</div><div class="c" style="left:1036.82px;top:812px;width:168.64px;padding-left:0.250px;letter-spacing:0.250px;">10.2 MiB</div><div class="c" style="left:1205.45px;top:812px;width:168.64px;padding-left:0.492px;letter-spacing:0.492px;">0 B</div><div class="a" style="left:1380px;top:819px;width:83px;height:22px;border-radius:2px;background:#22252b"></div><div class="a" style="left:1380px;top:819px;width:1.3px;height:22px;border-radius:0px;background:#73bf69"></div><div class="c" style="left:1400px;top:810.7px;width:125.53px;text-align:right;letter-spacing:0.526px">0.0%</div><div class="c" style="left:25.00px;top:848px;width:168.64px;text-align:left;padding-left:6px;letter-spacing:1.266px;">00325</div><div class="c" style="left:362.27px;top:848px;width:168.64px;padding-left:-0.115px;letter-spacing:-0.115px;">TDEV</div><div class="c" style="left:530.91px;top:848px;width:168.64px;padding-left:0.725px;letter-spacing:0.725px;">6.00009700002978e+31</div><div class="c" style="left:699.55px;top:848px;width:168.64px;padding-left:0.781px;-webkit-text-stroke:0.55px;letter-spacing:0.781px;">Mapped</div><div class="c" style="left:1036.82px;top:848px;width:168.64px;padding-left:0.246px;letter-spacing:0.246px;">5 GiB</div><div class="c" style="left:1205.45px;top:848px;width:168.64px;padding-left:0.492px;letter-spacing:0.492px;">0 B</div><div class="a" style="left:1380px;top:855px;width:83px;height:22px;border-radius:2px;background:#22252b"></div><div class="a" style="left:1380px;top:855px;width:1.3px;height:22px;border-radius:0px;background:#73bf69"></div><div class="c" style="left:1400px;top:846.7px;width:125.53px;text-align:right;letter-spacing:0.526px">0.0%</div><div class="c" style="left:25.00px;top:884px;width:168.64px;text-align:left;padding-left:6px;letter-spacing:0.812px;">003AF</div><div class="c" style="left:362.27px;top:884px;width:168.64px;padding-left:-0.115px;letter-spacing:-0.115px;">TDEV</div><div class="c" style="left:530.91px;top:884px;width:168.64px;padding-left:0.725px;letter-spacing:0.725px;">6.00009700002978e+31</div><div class="c" style="left:699.55px;top:884px;width:168.64px;padding-left:0.781px;-webkit-text-stroke:0.55px;letter-spacing:0.781px;">Mapped</div><div class="c" style="left:1036.82px;top:884px;width:168.64px;padding-left:0.246px;letter-spacing:0.246px;">5 GiB</div><div class="c" style="left:1205.45px;top:884px;width:168.64px;padding-left:0.492px;letter-spacing:0.492px;">0 B</div><div class="a" style="left:1380px;top:891px;width:83px;height:22px;border-radius:2px;background:#22252b"></div><div class="a" style="left:1380px;top:891px;width:1.3px;height:22px;border-radius:0px;background:#73bf69"></div><div class="c" style="left:1400px;top:882.7px;width:125.53px;text-align:right;letter-spacing:0.526px">0.0%</div><div class="c" style="left:25.00px;top:920px;width:168.64px;text-align:left;padding-left:6px;letter-spacing:1.016px;">00077</div><div class="c" style="left:362.27px;top:920px;width:168.64px;padding-left:-0.115px;letter-spacing:-0.115px;">TDEV</div><div class="c" style="left:530.91px;top:920px;width:168.64px;padding-left:0.725px;letter-spacing:0.725px;">6.00009700002978e+31</div><div class="c" style="left:699.55px;top:920px;width:168.64px;padding-left:0.781px;-webkit-text-stroke:0.55px;letter-spacing:0.781px;">Mapped</div><div class="c" style="left:1036.82px;top:920px;width:168.64px;padding-left:0.250px;letter-spacing:0.250px;">10.2 MiB</div><div class="c" style="left:1205.45px;top:920px;width:168.64px;padding-left:0.492px;letter-spacing:0.492px;">0 B</div><div class="a" style="left:1380px;top:927px;width:83px;height:22px;border-radius:2px;background:#22252b"></div><div class="a" style="left:1380px;top:927px;width:1.3px;height:22px;border-radius:0px;background:#73bf69"></div><div class="c" style="left:1400px;top:918.7px;width:125.53px;text-align:right;letter-spacing:0.526px">0.0%</div></div></div><div class="pg dis" style="left:703px;top:1002px;width:32px"><svg style="left:14.3px;top:8.5px" width="4" height="7.5"><path d="M3.6 0.6L0.6 3.75L3.6 6.9" fill="none" stroke="#6f707b" stroke-width="1.3" stroke-linecap="round" stroke-linejoin="round"/></svg></div><div class="pg on" style="left:745px;top:1002px;width:21px">1</div><div class="pg n" style="left:776px;top:1002px;width:24px;">2</div><div class="pg n" style="left:810px;top:1002px;width:23px;">3</div><div class="pg n" style="left:843px;top:1002px;width:24px;">4</div><div class="pg n" style="left:877px;top:1002px;width:24px;">5</div><div class="pg n" style="left:911px;top:1002px;width:24px;">6</div><div class="pg n" style="left:945px;top:1002px;width:23px;">7</div><div class="pg" style="left:978px;top:1002px;width:16px"><svg style="left:1.6px;top:10.3px" width="13" height="3"><circle cx="1.3" cy="1.5" r="1.15" fill="#ccccdc"/><circle cx="6" cy="1.5" r="1.15" fill="#ccccdc"/><circle cx="10.7" cy="1.5" r="1.15" fill="#ccccdc"/></svg></div><div class="pg n" style="left:1004px;top:1002px;width:38px; letter-spacing:1px;padding-left:1px;">827</div><div class="pg n" style="left:1052px;top:1002px;width:32px"><svg style="left:13.6px;top:7.7px" width="4" height="7.5"><path d="M0.5 0.7L3.4 3.75L0.5 6.8" fill="none" stroke="#ccccdc" stroke-width="1.4" stroke-linecap="round" stroke-linejoin="round"/></svg></div><span class="t" style="left:1099.3px;top:1005.04px;font-size:12px;line-height:18px;color:#9d9eab;letter-spacing:0.467px;">1 - 5 of 4134 rows</span><div class="a" style="left:16px;top:1048px;width:1873px;height:30px;background:#181b1f;border-radius:2px"></div><svg style="left:27.8px;top:1060px" width="4.6" height="8"><path d="M0.5 0.5L4.1 4L0.5 7.5" fill="none" stroke="#ccccdc" stroke-width="1.3" stroke-linecap="round" stroke-linejoin="round"/></svg><span class="t" style="left:38.3px;top:1050.66px;font-size:16px;line-height:24px;-webkit-text-stroke:0.35px;color:#ccccdc;letter-spacing:0.539px;">Shares</span><span class="t" style="left:109.4px;top:1055.14px;font-size:12px;line-height:18px;font-style:italic;color:#9d9eab;letter-spacing:0.153px;">(1 panel)</span><svg style="left:1877px;top:1053.3px" width="8" height="19"><rect x="0" y="0" width="2.4" height="2.4" fill="#3f4046"/><rect x="0" y="5.3" width="2.4" height="2.4" fill="#3f4046"/><rect x="0" y="10.6" width="2.4" height="2.4" fill="#3f4046"/><rect x="0" y="15.9" width="2.4" height="2.4" fill="#3f4046"/><rect x="5.2" y="0" width="2.4" height="2.4" fill="#3f4046"/><rect x="5.2" y="5.3" width="2.4" height="2.4" fill="#3f4046"/><rect x="5.2" y="10.6" width="2.4" height="2.4" fill="#3f4046"/><rect x="5.2" y="15.9" width="2.4" height="2.4" fill="#3f4046"/></svg><div class="a" style="left:1905px;top:0;width:14px;height:1079px;background:#2c2c2c"></div><div class="a" style="left:1908px;top:18px;width:9px;height:996px;background:#9f9f9f;border-radius:4.5px"></div><svg style="left:1908px;top:5px" width="9" height="7"><path d="M4.5 0L9 7H0Z" fill="#9f9f9f"/></svg><svg style="left:1908px;top:1069px" width="9" height="7"><path d="M0 0H9L4.5 7Z" fill="#9f9f9f"/></svg></body></html>
